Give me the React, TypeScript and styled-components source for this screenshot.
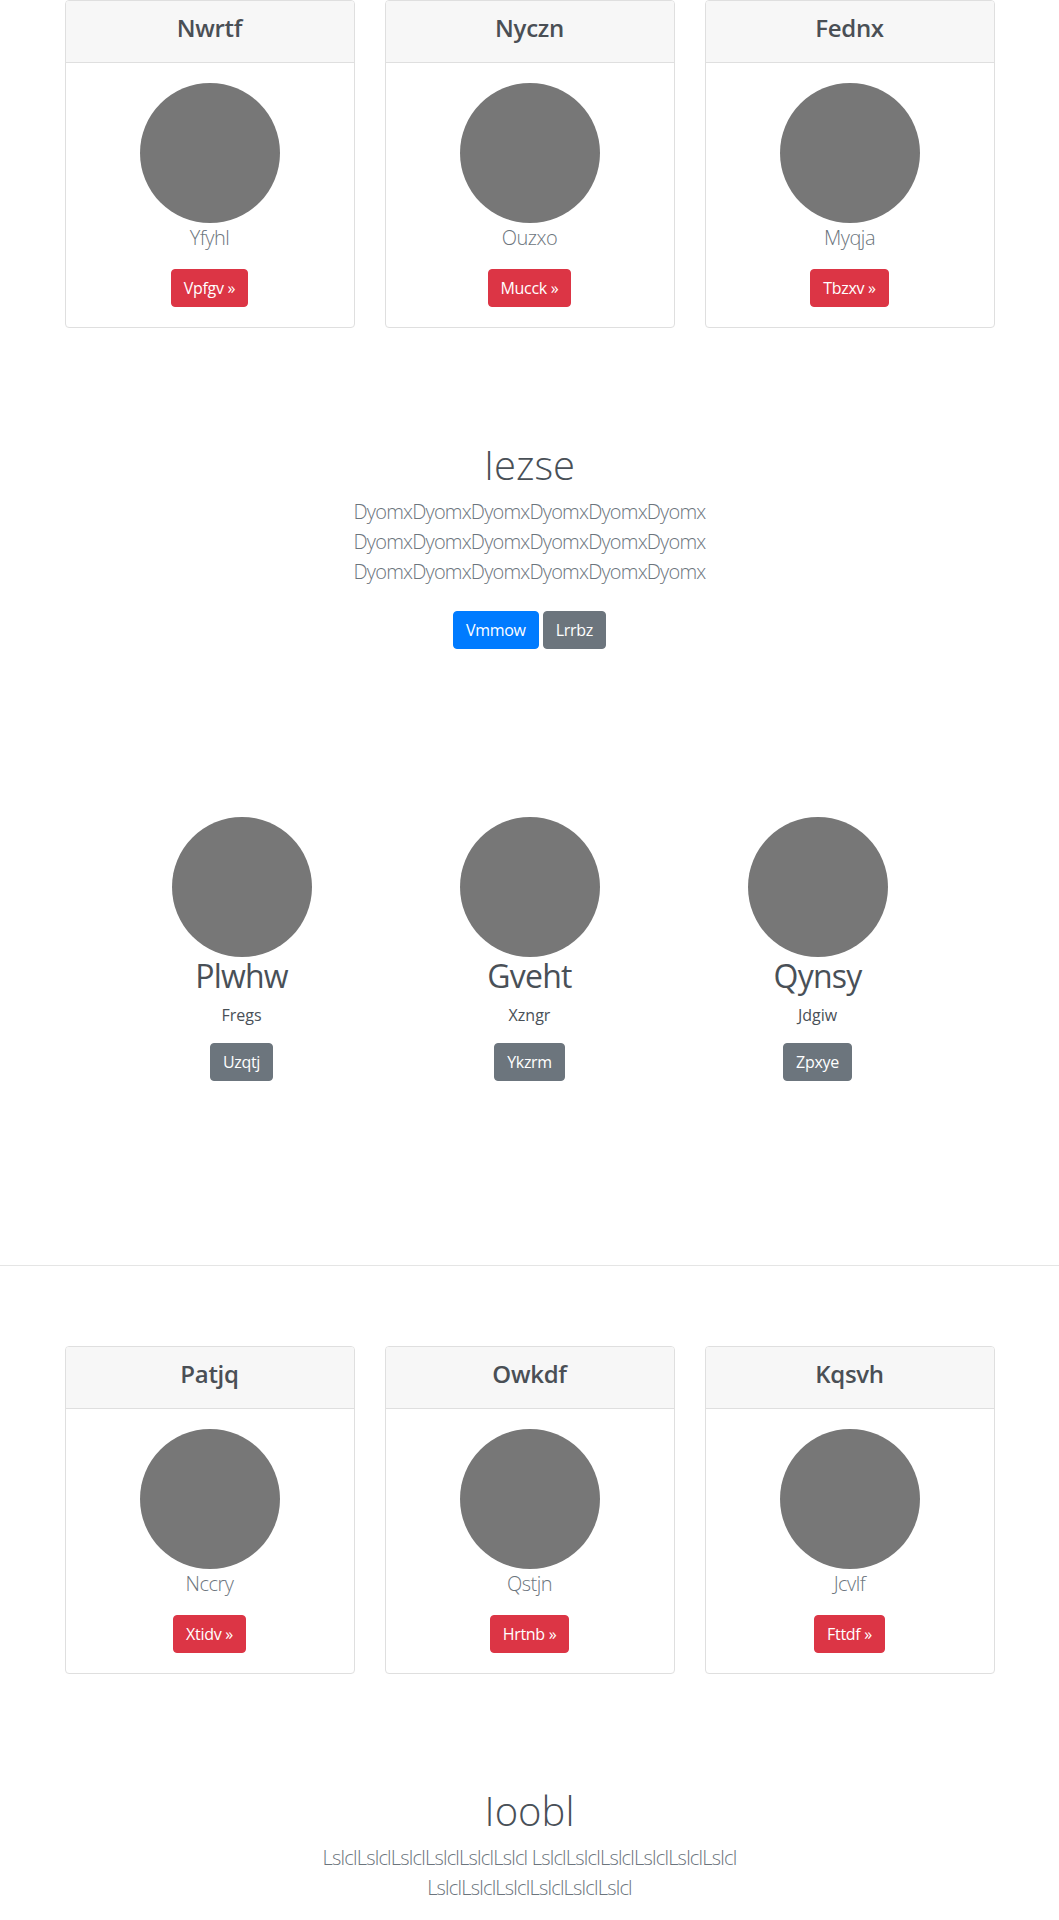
import styled, { createGlobalStyle } from 'styled-components'

const GlobalStyle = createGlobalStyle`
  html, body {
    margin: 0;
    padding: 0;
    background: #fff;
  }
  body {
    font-family: 'Open Sans', 'Noto Sans', 'Liberation Sans', sans-serif;
    font-size: 16px;
    line-height: 1.5;
    color: #495057;
  }
  * {
    box-sizing: border-box;
  }
`

const Page = styled.div`
  display: flex;
  flex-direction: column;
`

const CardDeck = styled.div`
  width: 960px;
  margin: 0 auto;
  padding: 0 15px;
  display: grid;
  grid-template-columns: repeat(3, 1fr);
  gap: 30px;
`

const Card = styled.div`
  display: flex;
  flex-direction: column;
  border: 1px solid #dfdfdf;
  border-radius: 4px;
  background: #fff;
  text-align: center;
`

const CardHeader = styled.div`
  padding: 13px 20px 11px;
  background: #f7f7f7;
  border-bottom: 1px solid #dfdfdf;
  border-radius: 3px 3px 0 0;
`

const CardTitle = styled.h4`
  margin: 0 0 8px;
  font-size: 24px;
  line-height: 1.2;
  font-weight: 600;
  letter-spacing: -0.3px;
  color: #4a4f55;
`

const CardBody = styled.div`
  display: flex;
  flex-direction: column;
  align-items: center;
  padding: 20px;
`

const Avatar = styled.div`
  width: 140px;
  height: 140px;
  border-radius: 50%;
  background: #777;
  flex-shrink: 0;
`

const CardLead = styled.p`
  margin: 0 0 16px;
  font-size: 20px;
  line-height: 30px;
  font-weight: 300;
  letter-spacing: -0.5px;
  color: #6c757d;
`

const variants = {
  primary: '#007bff',
  secondary: '#6c757d',
  danger: '#dc3545',
}

const Button = styled.a<{ $variant: keyof typeof variants }>`
  display: inline-block;
  padding: 6px 12px;
  font-size: 16px;
  line-height: 24px;
  font-weight: 400;
  letter-spacing: -0.3px;
  color: #fff;
  background: ${({ $variant }) => variants[$variant]};
  border: 1px solid ${({ $variant }) => variants[$variant]};
  border-radius: 4px;
  text-decoration: none;
  cursor: pointer;
`

const Jumbotron = styled.section`
  padding: 113px 0 160px;
  text-align: center;
`

const JumboInner = styled.div`
  max-width: 640px;
  margin: 0 auto;
  padding: 0 15px;
`

const JumboHeading = styled.h1`
  margin: 0 0 8px;
  font-size: 40px;
  line-height: 1.2;
  font-weight: 300;
  color: #495057;
`

const Lead = styled.p`
  margin: 0 0 16px;
  font-size: 20px;
  line-height: 30px;
  font-weight: 300;
  letter-spacing: -0.8px;
  color: #6c757d;
`

const Actions = styled.p`
  margin: 0;
  display: flex;
  justify-content: center;
  gap: 4px;
  padding: 8px 0;
`

const Marketing = styled.section`
  width: 864px;
  margin: 0 auto;
  padding-bottom: 168px;
  display: grid;
  grid-template-columns: repeat(3, 1fr);
`

const Feature = styled.div`
  display: flex;
  flex-direction: column;
  align-items: center;
  text-align: center;
`

const FeatureName = styled.h2`
  margin: 0 0 8px;
  font-size: 32px;
  line-height: 38.4px;
  font-weight: 400;
  letter-spacing: -0.8px;
  color: #495057;
`

const FeatureText = styled.p`
  margin: 0 12px 16px;
  font-size: 16px;
  line-height: 24px;
  color: #495057;
`

const FeatureAction = styled.p`
  margin: 0 0 16px;
  display: flex;
`

const Divider = styled.hr`
  width: 100%;
  margin: 0 0 80px;
  border: 0;
  border-top: 1px solid #e5e5e5;
`

type Item = { title: string; text: string; action: string }

const topCards: Item[] = [
  { title: 'Nwrtf', text: 'Yfyhl', action: 'Vpfgv' },
  { title: 'Nyczn', text: 'Ouzxo', action: 'Mucck' },
  { title: 'Fednx', text: 'Myqja', action: 'Tbzxv' },
]

const bottomCards: Item[] = [
  { title: 'Patjq', text: 'Nccry', action: 'Xtidv' },
  { title: 'Owkdf', text: 'Qstjn', action: 'Hrtnb' },
  { title: 'Kqsvh', text: 'Jcvlf', action: 'Fttdf' },
]

const features: Item[] = [
  { title: 'Plwhw', text: 'Fregs', action: 'Uzqtj' },
  { title: 'Gveht', text: 'Xzngr', action: 'Ykzrm' },
  { title: 'Qynsy', text: 'Jdgiw', action: 'Zpxye' },
]

function CardRow({ items }: { items: Item[] }) {
  return (
    <CardDeck>
      {items.map((item) => (
        <Card key={item.title}>
          <CardHeader>
            <CardTitle>{item.title}</CardTitle>
          </CardHeader>
          <CardBody>
            <Avatar />
            <CardLead>{item.text}</CardLead>
            <Button $variant="danger">{item.action} &raquo;</Button>
          </CardBody>
        </Card>
      ))}
    </CardDeck>
  )
}

const dyomx = 'Dyomx'.repeat(6)
const lslcl = 'Lslcl'.repeat(6)

export default function App() {
  return (
    <Page>
      <GlobalStyle />
      <CardRow items={topCards} />

      <Jumbotron>
        <JumboInner>
          <JumboHeading>Iezse</JumboHeading>
          <Lead>{[dyomx, dyomx, dyomx].join(' ')}</Lead>
          <Actions>
            <Button $variant="primary">Vmmow</Button>
            <Button $variant="secondary">Lrrbz</Button>
          </Actions>
        </JumboInner>
      </Jumbotron>

      <Marketing>
        {features.map((f) => (
          <Feature key={f.title}>
            <Avatar />
            <FeatureName>{f.title}</FeatureName>
            <FeatureText>{f.text}</FeatureText>
            <FeatureAction>
              <Button $variant="secondary">{f.action}</Button>
            </FeatureAction>
          </Feature>
        ))}
      </Marketing>

      <Divider />

      <CardRow items={bottomCards} />

      <Jumbotron>
        <JumboInner>
          <JumboHeading>Ioobl</JumboHeading>
          <Lead>{[lslcl, lslcl, lslcl].join(' ')}</Lead>
        </JumboInner>
      </Jumbotron>
    </Page>
  )
}
